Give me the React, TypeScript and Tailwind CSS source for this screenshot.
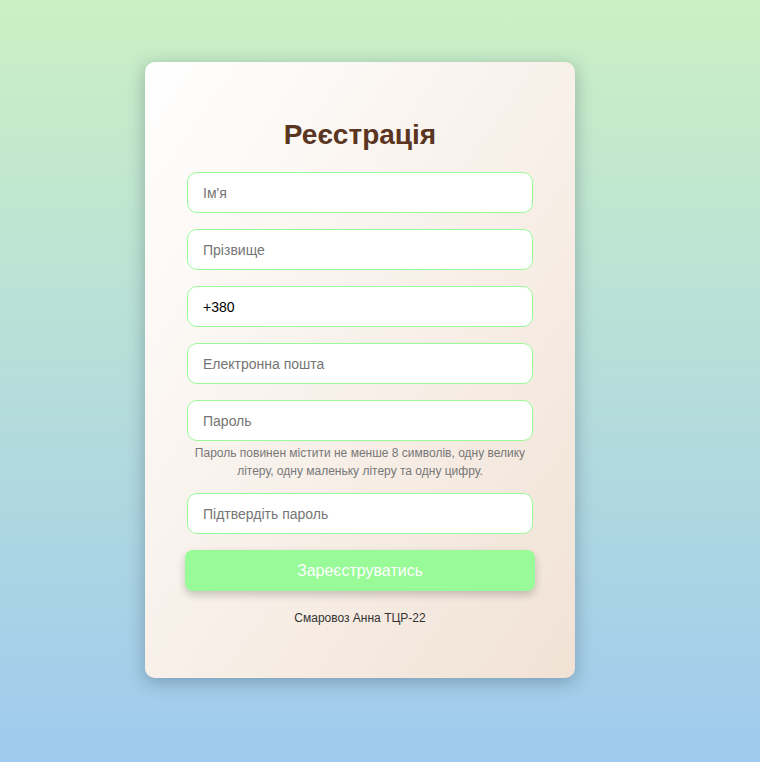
import { useState } from "react"

const fields = [
  { name: "first", placeholder: "Ім'я", type: "text" },
  { name: "last", placeholder: "Прізвище", type: "text" },
  { name: "phone", placeholder: "Телефон", type: "tel", value: "+380" },
  { name: "email", placeholder: "Електронна пошта", type: "email" },
]

const inputCls =
  "mx-[2px] h-[41px] rounded-[10px] border border-[#98fb98] bg-white px-[15px] text-[14px] text-black placeholder:text-[#757575] outline-none"

export default function App() {
  const [phone, setPhone] = useState("+380")

  return (
    <div
      className="flex min-h-[762px] w-full justify-center bg-gradient-to-b from-[#ccf0c4] to-[#a0caee] pt-[62px] pr-10"
      style={{ fontFamily: "'Liberation Sans', Arial, sans-serif" }}
    >
      <div className="h-[616px] w-[430px] rounded-[10px] bg-gradient-to-br from-[#ffffff] to-[#f1e2d5] px-10 pt-[57px] shadow-[0_4px_18px_rgba(40,60,80,0.35)]">
        <h2 className="mb-[21px] text-center text-[28px] font-bold leading-[32px] text-[#5a3622]">Реєстрація</h2>

        <form className="flex flex-col" onSubmit={(e) => e.preventDefault()}>
          {fields.map((f) =>
            f.value !== undefined ? (
              <input
                key={f.name}
                type={f.type}
                value={phone}
                onChange={(e) => setPhone(e.target.value)}
                className={inputCls + " mb-4"}
              />
            ) : (
              <input key={f.name} type={f.type} placeholder={f.placeholder} className={inputCls + " mb-4"} />
            )
          )}

          <input type="password" placeholder="Пароль" className={inputCls} />
          <p className="mt-[3px] mb-[13px] text-center text-[12px] leading-[18px] text-[#777]">
            Пароль повинен містити не менше 8 символів, одну велику літеру, одну маленьку літеру та одну цифру.
          </p>

          <input type="password" placeholder="Підтвердіть пароль" className={inputCls + " mb-4"} />

          <button
            type="submit"
            className="h-[41px] rounded-[8px] bg-[#98fb98] text-[16px] text-white shadow-[0_4px_8px_rgba(0,0,0,0.2)]"
          >
            Зареєструватись
          </button>
        </form>

        <p className="mt-5 text-center text-[12px] leading-[14px] text-[#333]">Смаровоз Анна ТЦР-22</p>
      </div>
    </div>
  )
}
